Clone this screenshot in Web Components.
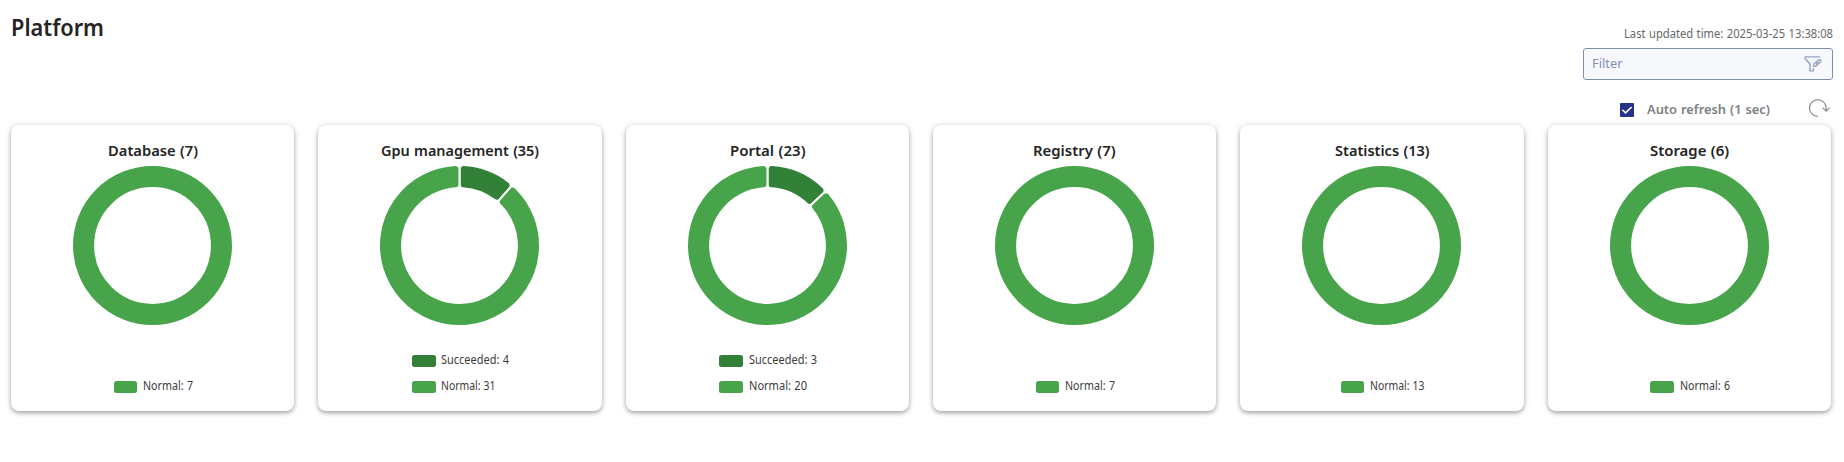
<!DOCTYPE html>
<html lang="en">
<head>
<meta charset="utf-8">
<title>Platform</title>
<style>
  body { margin: 0; background: #fff; font-family: "Noto Sans", "Open Sans", sans-serif; color: #242424; }
</style>
</head>
<body>
<platform-page></platform-page>
<script>
  // Text condensed to a given width; the box takes that width in the layout.
  class FitText extends HTMLElement {
    connectedCallback() {
      const root = this.attachShadow({ mode: 'open' });
      root.innerHTML = `<style>
        :host { display: block; white-space: nowrap; flex: none; word-spacing: .6px; }
        span { display: inline-block; transform-origin: 0 0; }
      </style><span><slot></slot></span>`;
      const w = parseFloat(this.getAttribute('w'));
      const span = root.querySelector('span');
      const natural = span.getBoundingClientRect().width;
      this.style.width = w + 'px';
      if (natural) span.style.transform = `scaleX(${w / natural})`;
    }
  }
  customElements.define('fit-text', FitText);

  // Doughnut chart with rounded slices, from a "value:color,..." list.
  class DonutChart extends HTMLElement {
    connectedCallback() {
      const root = this.attachShadow({ mode: 'open' });
      const parts = this.getAttribute('data').split(',').map(p => p.split(':'));
      const total = parts.reduce((s, p) => s + +p[0], 0);
      const R = 80.5, r = 57.4, c = 4;
      let a = 0, shapes = '';
      if (parts.length === 1) {
        shapes = `<circle r="68.95" fill="none" stroke="${parts[0][1]}" stroke-width="21.1"/>`;
      } else {
        for (const [v, color] of parts) {
          const b = a + v / total * 2 * Math.PI;
          shapes += `<path d="${this.slice(a, b, R, r, c)}" fill="${color}" stroke="#fff" stroke-width="2"/>`;
          a = b;
        }
      }
      root.innerHTML = `<style>:host{display:block} svg{display:block}</style>
        <svg width="163" height="163" viewBox="-81.5 -81.5 163 163">${shapes}</svg>`;
    }
    slice(a, b, R, r, c) {
      const pt = (ang, d) => (d * Math.sin(ang)).toFixed(3) + ' ' + (-d * Math.cos(ang)).toFixed(3);
      const dO = Math.asin(c / (R - c)), dI = Math.asin(c / (r + c));
      const lo = (R - c) * Math.cos(dO), li = (r + c) * Math.cos(dI);
      const big = b - a > Math.PI ? 1 : 0;
      return `M${pt(a, lo)}A${c} ${c} 0 0 1 ${pt(a + dO, R)}A${R} ${R} 0 ${big} 1 ${pt(b - dO, R)}` +
        `A${c} ${c} 0 0 1 ${pt(b, lo)}L${pt(b, li)}A${c} ${c} 0 0 1 ${pt(b - dI, r)}` +
        `A${r} ${r} 0 ${big} 0 ${pt(a + dI, r)}A${c} ${c} 0 0 1 ${pt(a, li)}Z`;
    }
  }
  customElements.define('donut-chart', DonutChart);

  class LegendItem extends HTMLElement {
    connectedCallback() {
      this.attachShadow({ mode: 'open' }).innerHTML = `<style>
        :host { display: flex; height: 12px; align-items: flex-start; gap: 5.8px; font-size: 12px; line-height: 18px; color: #3c3c3c; }
        i { width: 23.5px; height: 12px; border-radius: 2.5px; background: ${this.getAttribute('color')}; }
        fit-text { margin-top: -4px; }
      </style><i></i><fit-text w="${this.getAttribute('w')}">${this.getAttribute('text')}</fit-text>`;
    }
  }
  customElements.define('legend-item', LegendItem);

  class StatusCard extends HTMLElement {
    connectedCallback() {
      this.attachShadow({ mode: 'open' }).innerHTML = `<style>
        :host { display: flex; flex-direction: column; align-items: center; box-sizing: border-box; height: 286px;
          padding: 13px 0 18px; border-radius: 8px; background: #fff;
          box-shadow: 0 2px 4px rgba(0,0,0,.32), 0 0 8px rgba(0,0,0,.09); }
        .title { font-size: 15px; line-height: 24px; font-weight: 600; height: 26px; }
        .ring { width: 283px; display: flex; justify-content: center; align-self: flex-start; }
        .legend { display: flex; flex-direction: column; gap: 14px; margin-top: auto; padding-left: 1.5px; }
      </style>
      <div class="title"><fit-text w="${this.getAttribute('w')}">${this.getAttribute('name')}</fit-text></div>
      <div class="ring"><donut-chart data="${this.getAttribute('data')}"></donut-chart></div>
      <div class="legend"><slot></slot></div>`;
    }
  }
  customElements.define('status-card', StatusCard);

  class FilterBox extends HTMLElement {
    connectedCallback() {
      this.attachShadow({ mode: 'open' }).innerHTML = `<style>
        :host { display: flex; box-sizing: border-box; width: 250px; height: 32px; padding: 0 10px 0 7.5px;
          align-items: center; justify-content: space-between; border: 1px solid #7f8eb0; border-radius: 3px;
          background: #f6f8fc; color: #8391b0; font-size: 13px; line-height: 20px; }
        fit-text { margin-top: -3px; }
        svg { display: block; }
      </style><fit-text w="30.5">Filter</fit-text>
      <svg width="18" height="18" viewBox="0 0 18 18" fill="none" stroke="#96a3bf" stroke-width="1.4" stroke-linejoin="round" stroke-linecap="round">
        <path d="M15.5 1.9H1.2V3.7L6 9V15.9H9.3V13.6"/><path d="M9.6 11.4L10 9L14.6 5Q15.8 4.4 16.6 5.2Q17.2 6.1 16.3 7L11.8 11.2Z"/><path d="M12.4 8.9L14 7.4"/>
      </svg>`;
    }
  }
  customElements.define('filter-box', FilterBox);

  class RefreshBar extends HTMLElement {
    connectedCallback() {
      this.attachShadow({ mode: 'open' }).innerHTML = `<style>
        :host { display: flex; align-items: flex-start; height: 26px; color: #7b8083; }
        .box { display: block; margin: 4px 13px 0 0; }
        fit-text { font-size: 13.3px; line-height: 20px; font-weight: 600; margin-right: 38px; margin-top: -.5px; }
        .spin { display: block; margin-right: 3px; }
      </style>
      <svg class="box" width="14" height="14" viewBox="0 0 14 14"><rect width="14" height="14" rx="1" fill="#25328a"/><path d="M2.4 6.8L5.5 9.8L11.6 4" fill="none" stroke="#fff" stroke-width="1.6"/></svg>
      <fit-text w="123">Auto refresh (1 sec)</fit-text>
      <svg class="spin" width="22" height="20" viewBox="0 0 22 20" fill="none" stroke="#858a8d" stroke-width="1.2"><path d="M9.8 17.3A8.3 8.3 0 1 1 18.1 9V11.8"/><path d="M14.6 8.6L18.1 12.1L21.5 8.6"/></svg>`;
    }
  }
  customElements.define('refresh-bar', RefreshBar);

  class PlatformPage extends HTMLElement {
    connectedCallback() {
      const L = '#47a44b', D = '#338039';
      this.attachShadow({ mode: 'open' }).innerHTML = `<style>
        :host { display: block; box-sizing: border-box; padding: 0 13px 0 11px; height: 462px; }
        header { display: flex; justify-content: space-between; height: 125px; margin-right: -2px; }
        h1 { margin: 10px 0 0; font-size: 23px; line-height: 34px; font-weight: 600; }
        .tools { display: flex; flex-direction: column; align-items: flex-end; }
        .time { margin: 25px 0 5px; font-size: 12px; line-height: 18px; color: #686868; }
        filter-box { margin-bottom: 19px; }
        main { display: grid; grid-template-columns: repeat(6, 1fr); gap: 24px; position: relative; }
      </style>
      <header>
        <h1><fit-text w="93">Platform</fit-text></h1>
        <div class="tools">
          <div class="time"><fit-text w="209">Last updated time: 2025-03-25 13:38:08</fit-text></div>
          <filter-box></filter-box>
          <refresh-bar></refresh-bar>
        </div>
      </header>
      <main>
        <status-card name="Database (7)" w="90" data="7:${L}"><legend-item color="${L}" w="50" text="Normal: 7"></legend-item></status-card>
        <status-card name="Gpu management (35)" w="158" data="4:${D},31:${L}"><legend-item color="${D}" w="68" text="Succeeded: 4"></legend-item><legend-item color="${L}" w="54.5" text="Normal: 31"></legend-item></status-card>
        <status-card name="Portal (23)" w="75.5" data="3:${D},20:${L}"><legend-item color="${D}" w="68" text="Succeeded: 3"></legend-item><legend-item color="${L}" w="58" text="Normal: 20"></legend-item></status-card>
        <status-card name="Registry (7)" w="82.5" data="7:${L}"><legend-item color="${L}" w="50" text="Normal: 7"></legend-item></status-card>
        <status-card name="Statistics (13)" w="94.5" data="13:${L}"><legend-item color="${L}" w="54.5" text="Normal: 13"></legend-item></status-card>
        <status-card name="Storage (6)" w="79" data="6:${L}"><legend-item color="${L}" w="50" text="Normal: 6"></legend-item></status-card>
      </main>`;
    }
  }
  customElements.define('platform-page', PlatformPage);
</script>
</body>
</html>
